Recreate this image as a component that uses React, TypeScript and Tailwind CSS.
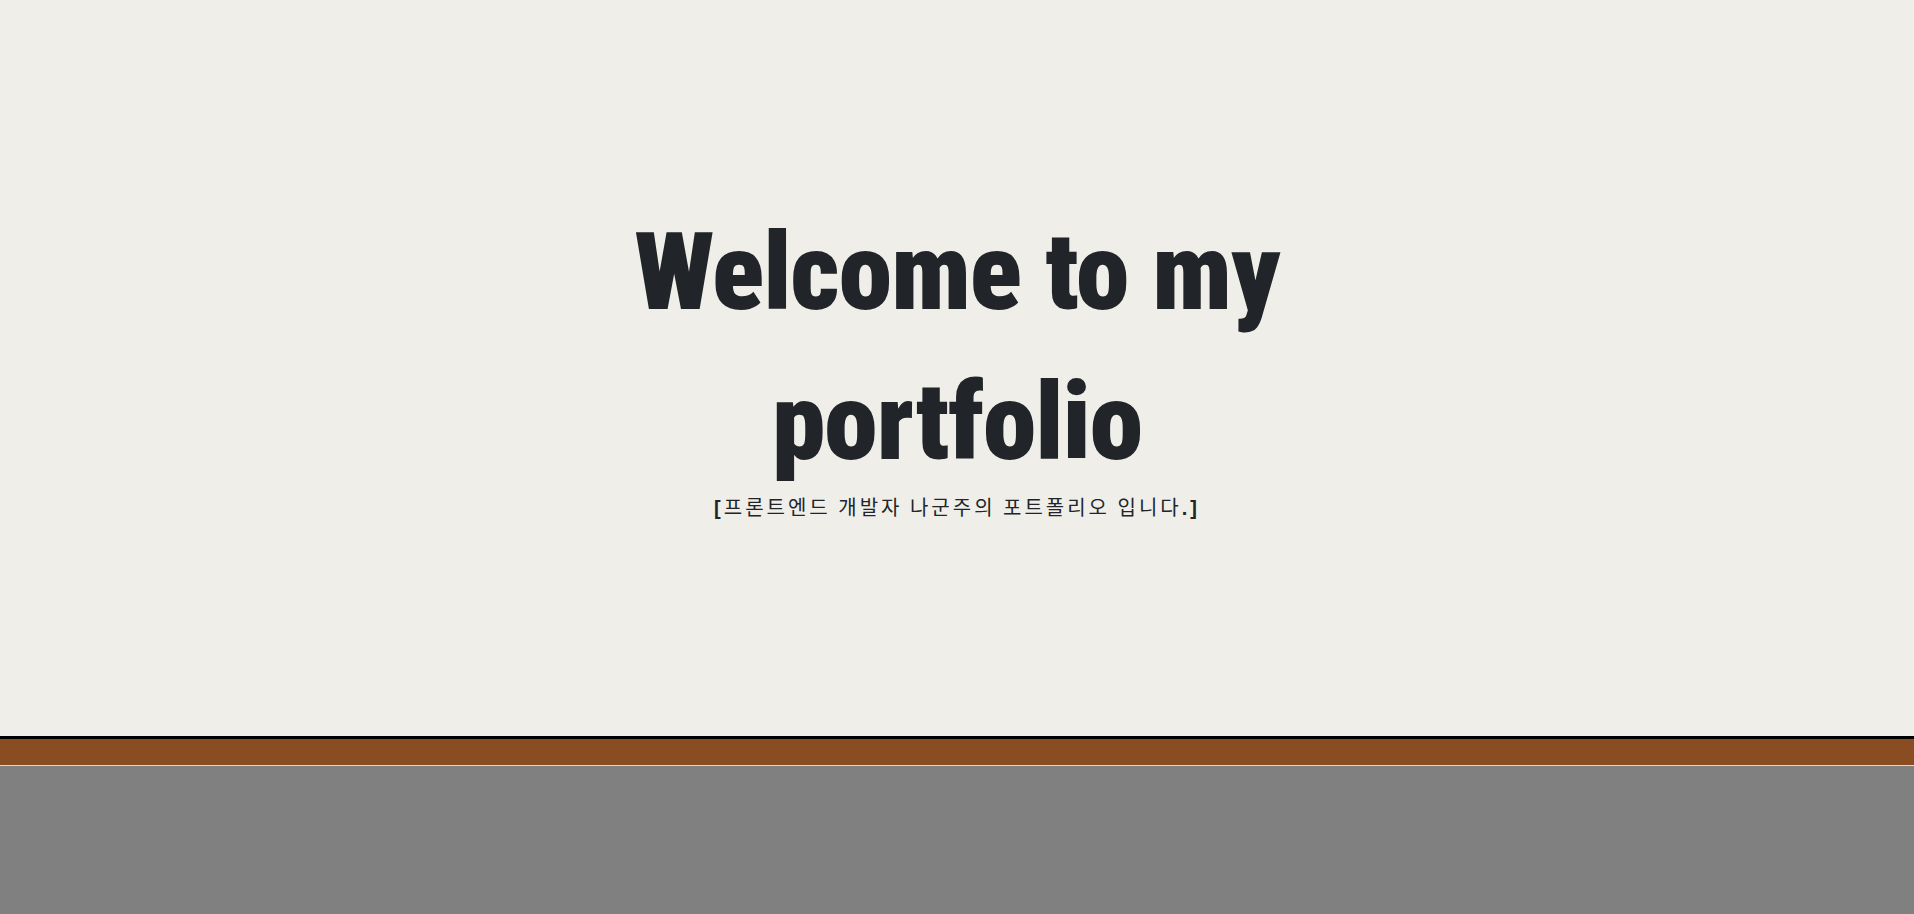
export default function App() {
  return (
    <div className="flex min-h-screen flex-col bg-[#808080]">
      <section className="flex h-[736px] flex-col items-center bg-[#efeee9] pt-[197px] text-[#212529]">
        <h1 className="text-center font-['Roboto',sans-serif] text-[108px] font-black leading-[150px] tracking-[-1px] [font-stretch:condensed]">
          Welcome to my
          <br />
          portfolio
        </h1>
        <p className="-mt-[4px] font-['Liberation_Sans','Noto_Sans_CJK_KR',sans-serif] text-[20px] leading-[27px] tracking-[3px]">
          <span className="font-bold">[</span>
          <span className="font-['Noto_Sans_CJK_KR',sans-serif] font-normal">프론트엔드 개발자 나군주의 포트폴리오 입니다</span>
          <span className="font-bold">.]</span>
        </p>
      </section>
      <div className="h-[30px] border-t-[3px] border-b border-t-black border-b-[#e6d6c2] bg-[#8a4d21]" />
      <div className="flex-1 bg-[#808080]" />
    </div>
  );
}
